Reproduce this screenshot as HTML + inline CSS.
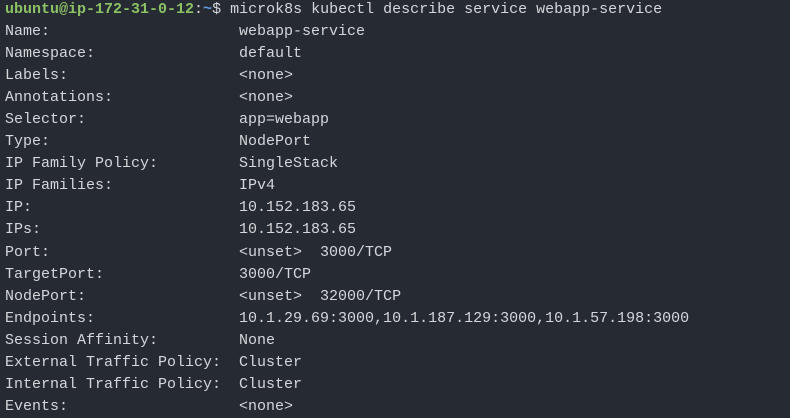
<!DOCTYPE html><html><head><style>
html,body{margin:0;background:#262a33;width:790px;height:416px;overflow:hidden}
pre{margin:0;position:absolute;left:5px;top:-1px;font-family:"Liberation Mono",monospace;font-size:15px;letter-spacing:0;line-height:22.05px;color:#d4d6da}
.g{color:#8cc265;font-weight:bold}.b{color:#5f9fe0;font-weight:bold}
</style></head><body><pre><span class="g">ubuntu@ip-172-31-0-12</span>:<span class="b">~</span>$ microk8s kubectl describe service webapp-service
Name:                     webapp-service
Namespace:                default
Labels:                   &lt;none&gt;
Annotations:              &lt;none&gt;
Selector:                 app=webapp
Type:                     NodePort
IP Family Policy:         SingleStack
IP Families:              IPv4
IP:                       10.152.183.65
IPs:                      10.152.183.65
Port:                     &lt;unset&gt;  3000/TCP
TargetPort:               3000/TCP
NodePort:                 &lt;unset&gt;  32000/TCP
Endpoints:                10.1.29.69:3000,10.1.187.129:3000,10.1.57.198:3000
Session Affinity:         None
External Traffic Policy:  Cluster
Internal Traffic Policy:  Cluster
Events:                   &lt;none&gt;</pre></body></html>
